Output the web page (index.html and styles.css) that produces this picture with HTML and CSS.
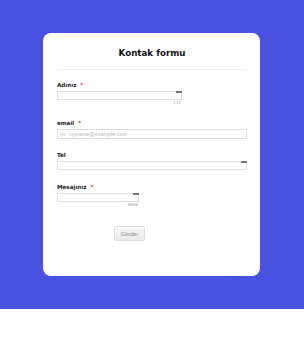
FILE: index.html
```html
<!DOCTYPE html>
<html lang="tr">
<head>
    <meta charset="UTF-8">
    <meta name="viewport" content="width=device-width, initial-scale=1.0">
    <title>Kontak formu</title>
    <link rel="stylesheet" href="styles.css">
</head>
<body>

    <!-- Blue backdrop -->
    <div class="page">
        <form class="card">
            <h1 class="title">Kontak formu</h1>

            <div class="field first">
                <label class="label">Adınız <span class="req">*</span></label>
                <div class="box short">
                    <input type="text" class="input">
                    <span class="grip"></span>
                </div>
                <div class="count short">111</div>
            </div>

            <div class="field second">
                <label class="label">email <span class="req">*</span></label>
                <div class="box wide">
                    <input type="text" class="input tall" placeholder="ex: myname@example.com">
                </div>
            </div>

            <div class="field">
                <label class="label">Tel</label>
                <div class="box wide">
                    <input type="text" class="input">
                    <span class="grip"></span>
                </div>
            </div>

            <div class="field">
                <label class="label">Mesajınız <span class="req">*</span></label>
                <div class="box small">
                    <input type="text" class="input">
                    <span class="grip"></span>
                </div>
                <div class="count small">6566</div>
            </div>

            <button type="button" class="btn">Gönder</button>
        </form>
    </div>

</body>
</html>
```

FILE: styles.css
```css
/* Global Reset */
* { margin: 0; padding: 0; box-sizing: border-box; }

body { font-family: "DejaVu Sans", Verdana, sans-serif; background-color: #fff; }

/* Blue backdrop */
.page {
    background-color: #4851e0;
    padding: 33px 0;
}

/* Form card */
.card {
    width: 217px;
    height: 243px;
    margin-left: 43px;
    padding: 14px 13px 0 14px;
    background: #fff;
    border-radius: 8px;
}

.title {
    font-size: 8.7px;
    line-height: 12px;
    font-weight: bold;
    color: #111;
    text-align: center;
    padding-bottom: 10px;
    border-bottom: 1px solid #eee;
    margin-bottom: 11px;
}

.field {
    margin-bottom: 13px;
}

.field.first { margin-bottom: 14px; }
.field.second { margin-bottom: 12px; }

.label {
    display: block;
    font-size: 5.6px;
    line-height: 8px;
    font-weight: bold;
    color: #222;
    margin-bottom: 2px;
}

.req {
    color: #f23a3c;
    margin-left: 2px;
}

.box {
    position: relative;
}

.short { width: 125px; }
.wide { width: 190px; }
.small { width: 82px; }

.input {
    display: block;
    width: 100%;
    height: 9px;
    border: 1px solid #ddd;
    background: #fff;
    font-family: "Liberation Sans", Arial, sans-serif;
    font-size: 5.4px;
    padding: 0 2px;
    color: #333;
}

.input.tall { height: 10px; }

.input::placeholder { color: #bbb; }

/* resize handle at the top right */
.grip {
    position: absolute;
    top: 0;
    right: 0;
    width: 6px;
    height: 1.5px;
    background: #777;
}

.count {
    font-size: 4px;
    line-height: 5px;
    color: #999;
    text-align: right;
    padding-right: 1px;
}

.btn {
    display: block;
    margin: 19px 0 0 57px;
    width: 31px;
    height: 15px;
    border: 1px solid #ddd;
    border-radius: 2px;
    background: linear-gradient(#fafafa, #e9e9e9);
    font-family: "Liberation Sans", Arial, sans-serif;
    font-size: 5.2px;
    color: #888;
}
```
